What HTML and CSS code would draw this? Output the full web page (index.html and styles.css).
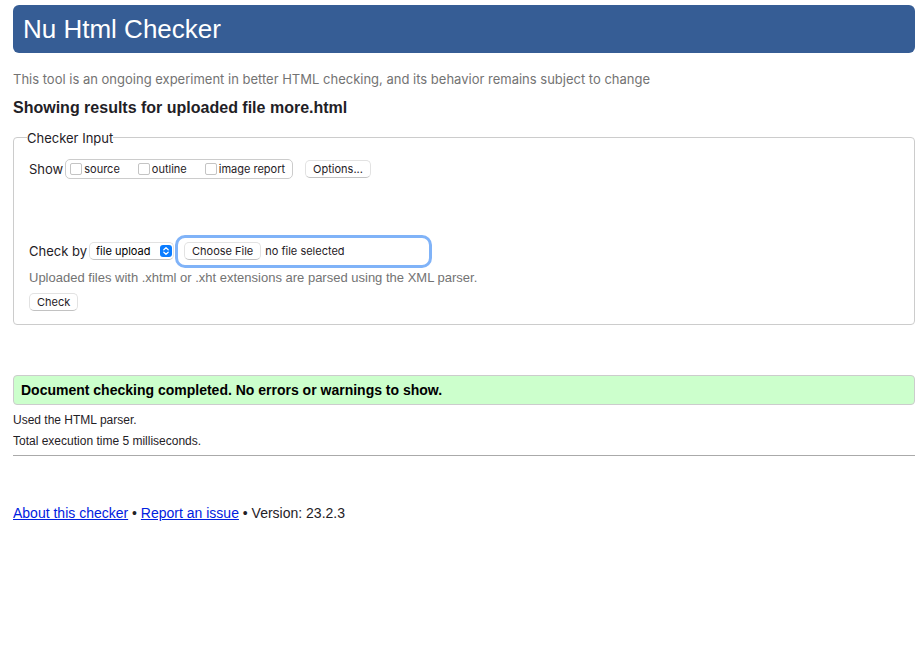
FILE: index.html
```html
<!DOCTYPE html>
<html lang="en">
<head>
<meta charset="utf-8">
<title>Showing results for uploaded file more.html</title>
<link rel="stylesheet" href="styles.css">
</head>
<body>
<header class="banner"><h1>Nu Html Checker</h1></header>
<main>
  <p class="intro">This tool is an ongoing experiment in better HTML checking, and its behavior remains subject to change</p>
  <h2 class="subject">Showing results for uploaded file more.html</h2>
  <form>
    <fieldset class="panel">
      <legend>Checker Input</legend>
      <div class="row show-row">
        <span class="row-label">Show</span>
        <div class="checks">
          <label><input type="checkbox" name="source">source</label>
          <label><input type="checkbox" name="outline">outline</label>
          <label><input type="checkbox" name="image">image report</label>
        </div>
        <button type="button" class="button options">Options...</button>
      </div>
      <div class="row input-row">
        <label class="row-label" for="method">Check by</label>
        <div class="select">
          <select id="method">
            <option>file upload</option>
            <option>address</option>
            <option>text input</option>
          </select>
          <svg viewBox="0 0 12 12" aria-hidden="true"><rect width="12" height="12" rx="3" fill="#0a7cff"/><path d="M3.8 4.8 6 2.7l2.2 2.1M3.8 7.2 6 9.3l2.2-2.1" fill="none" stroke="#fff" stroke-width="1.2" stroke-linecap="round" stroke-linejoin="round"/></svg>
        </div>
        <label class="file">
          <span class="button">Choose File</span>
          <span>no file selected</span>
          <input type="file" name="file">
        </label>
      </div>
      <p class="hint">Uploaded files with .xhtml or .xht extensions are parsed using the XML parser.</p>
      <button type="button" class="button">Check</button>
    </fieldset>
  </form>
  <p class="success">Document checking completed. No errors or warnings to show.</p>
  <div class="details">
    <p>Used the HTML parser.</p>
    <p>Total execution time 5 milliseconds.</p>
  </div>
</main>
<hr>
<footer><a href="#about">About this checker</a> • <a href="#issue">Report an issue</a> • Version: 23.2.3</footer>
</body>
</html>
```
FILE: styles.css
```css
* { box-sizing: border-box; }
body {
  margin: 5px 6px 0 13px;
  background: #fff;
  color: #1f2126;
  font: 14px/20px "Liberation Sans", Arial, sans-serif;
}
h1, h2, p { margin: 0; }
.banner {
  padding: 8px 10px;
  border-radius: 6px;
  background: #365d95;
  color: #fff;
}
.banner h1 { font-size: 26px; font-weight: 400; line-height: 32px; }
.intro {
  margin-top: 16px;
  color: #737373;
  font: 13px/20px Inter, sans-serif;
}
.subject { margin-top: 9px; font-size: 16px; line-height: 20px; }
.panel {
  margin: 11px 0 0;
  padding: 12px 15px 13px;
  border: 1px solid #ccc;
  border-radius: 4px;
  min-width: 0;
}
.panel legend { margin-left: -2px; padding: 2px 0 0; font: 13px/14px Inter, sans-serif; }
.row { display: flex; align-items: center; gap: 2px; font: 11px/16px Inter, sans-serif; }
.row-label { font-size: 13px; }
.show-row { height: 24px; }
.checks {
  display: flex;
  gap: 18px;
  height: 20px;
  align-items: center;
  padding: 0 7px 0 4px;
  border: 1px solid #ccc;
  border-radius: 5px;
}
.checks label { display: flex; align-items: center; gap: 2px; }
.checks input {
  appearance: none;
  width: 12px;
  height: 12px;
  margin: 0;
  border: 1px solid #c4c4c4;
  border-radius: 2px;
  background: #fff;
}
.checks input:checked { background: #0a7cff; }
.button {
  height: 18px;
  padding: 0 7px;
  border: 1px solid #e2e2e2;
  border-bottom-color: #c2c2c2;
  border-radius: 5px;
  background: #fff;
  color: #1f2126;
  font: 11px/16px Inter, sans-serif;
}
.options { margin-left: 10px; }
.input-row { margin-top: 53px; height: 34px; }
.select { position: relative; }
.select select {
  display: block;
  appearance: none;
  width: 85px;
  height: 18px;
  padding: 0 6px;
  border: 1px solid #e2e2e2;
  border-bottom-color: #c2c2c2;
  border-radius: 5px;
  background: #fff;
  color: #000;
  font: 11px/16px Inter, sans-serif;
}
.select svg { position: absolute; top: 3px; right: 2px; width: 12px; height: 12px; pointer-events: none; }
.file {
  position: relative;
  display: flex;
  align-items: center;
  gap: 4px;
  width: 257px;
  height: 33px;
  margin-left: -1px;
  padding: 0 6px;
  border: 3px solid #80b3f8;
  border-radius: 10px;
}
.file input { position: absolute; inset: 0; width: 100%; height: 100%; opacity: 0; }
.hint { margin: 0 0 3px; color: #737373; font-size: 13px; line-height: 20px; }
.success {
  margin-top: 50px;
  padding: 4px 7px;
  border: 1px solid #ccc;
  border-radius: 4px;
  background: #cfc;
  color: #000;
  font-weight: 700;
}
.details {
  display: grid;
  gap: 5px;
  margin-top: 7px;
  font-size: 12px;
  line-height: 16px;
}
hr { margin: 6px 0 0; border: 0; border-top: 1px solid #aaa; }
footer { margin-top: 47px; }
a { color: #0020e0; }
```
